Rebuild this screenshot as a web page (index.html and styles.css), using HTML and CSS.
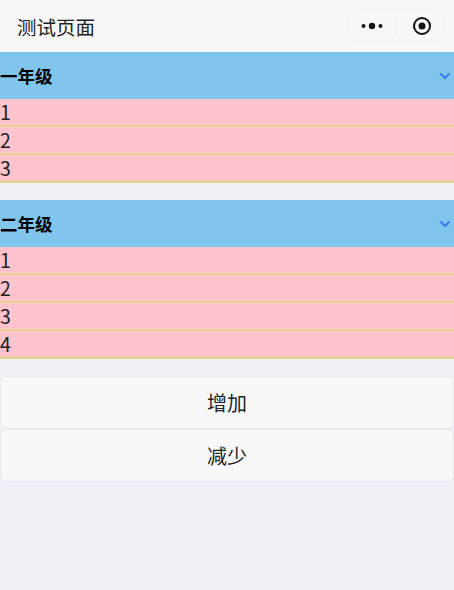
FILE: index.html
```html
<!DOCTYPE html>
<html lang="zh-CN">
<head>
    <meta charset="UTF-8">
    <meta name="viewport" content="width=device-width, initial-scale=1.0">
    <title>测试页面</title>
    <link rel="stylesheet" href="styles.css">
</head>
<body>
    <div class="navbar">
        <span class="nav-title">测试页面</span>
        <div class="capsule">
            <svg class="capsule-more" width="22" height="8" viewBox="0 0 22 8">
                <circle cx="2.5" cy="4" r="2" fill="#111"/>
                <circle cx="11" cy="4" r="3.2" fill="#111"/>
                <circle cx="19.5" cy="4" r="2" fill="#111"/>
            </svg>
            <span class="capsule-line"></span>
            <svg class="capsule-close" width="20" height="20" viewBox="0 0 20 20">
                <circle cx="10" cy="10" r="8" fill="none" stroke="#111" stroke-width="2"/>
                <circle cx="10" cy="10" r="3.5" fill="#111"/>
            </svg>
        </div>
    </div>

    <div class="grade">
        <div class="grade-head">
            <span>一年级</span>
            <svg class="arrow" width="12" height="8" viewBox="0 0 12 8">
                <path d="M1.5 1.5 L6 6 L10.5 1.5" fill="none" stroke="#3a78ea" stroke-width="2"/>
            </svg>
        </div>
        <div class="row">1</div>
        <div class="row">2</div>
        <div class="row">3</div>
    </div>

    <div class="grade">
        <div class="grade-head">
            <span>二年级</span>
            <svg class="arrow" width="12" height="8" viewBox="0 0 12 8">
                <path d="M1.5 1.5 L6 6 L10.5 1.5" fill="none" stroke="#3a78ea" stroke-width="2"/>
            </svg>
        </div>
        <div class="row">1</div>
        <div class="row">2</div>
        <div class="row">3</div>
        <div class="row">4</div>
    </div>

    <div class="buttons">
        <button class="btn">增加</button>
        <button class="btn">减少</button>
    </div>
</body>
</html>
```

FILE: styles.css
```css
html {
    height: 100%;
}
body {
    margin: 0;
    min-height: 100%;
    background-color: #f0f0f6;
    font-family: "Noto Sans CJK SC", "Noto Sans", sans-serif;
    color: #111;
    overflow: hidden;
}
.navbar {
    height: 52px;
    box-sizing: border-box;
    padding: 0 8px 0 17px;
    background-color: #f8f8f8;
    border-bottom: 1px solid #eeeeee;
    display: flex;
    align-items: center;
    justify-content: space-between;
}
.nav-title {
    font-size: 19.5px;
    color: #222;
    margin-top: 2px;
}
.capsule {
    width: 100px;
    height: 33px;
    box-sizing: border-box;
    border: 1px solid #f3f3f3;
    border-radius: 17px;
    display: flex;
    align-items: center;
    padding-left: 14px;
}
.capsule-line {
    width: 1px;
    height: 18px;
    background-color: #eee;
    margin: 0 15px 0 13px;
}
.grade {
    margin-bottom: 17px;
}
.grade-head {
    height: 47px;
    background-color: #7fc5ec;
    display: flex;
    align-items: center;
    justify-content: space-between;
    font-size: 17.5px;
    font-weight: bold;
    color: #000;
    padding-right: 3px;
}
.row {
    height: 26px;
    line-height: 26px;
    background-color: #fec3cc;
    border-bottom: 2px solid #e3d68a;
    font-size: 19.5px;
    color: #222;
}
.buttons {
    display: flex;
    flex-direction: column;
}
.btn {
    height: 53px;
    width: 100%;
    box-sizing: border-box;
    background-color: #f8f8f8;
    border: 1px solid #e9e9e9;
    border-radius: 6px;
    font-family: inherit;
    font-size: 20px;
    color: #222;
}
```
